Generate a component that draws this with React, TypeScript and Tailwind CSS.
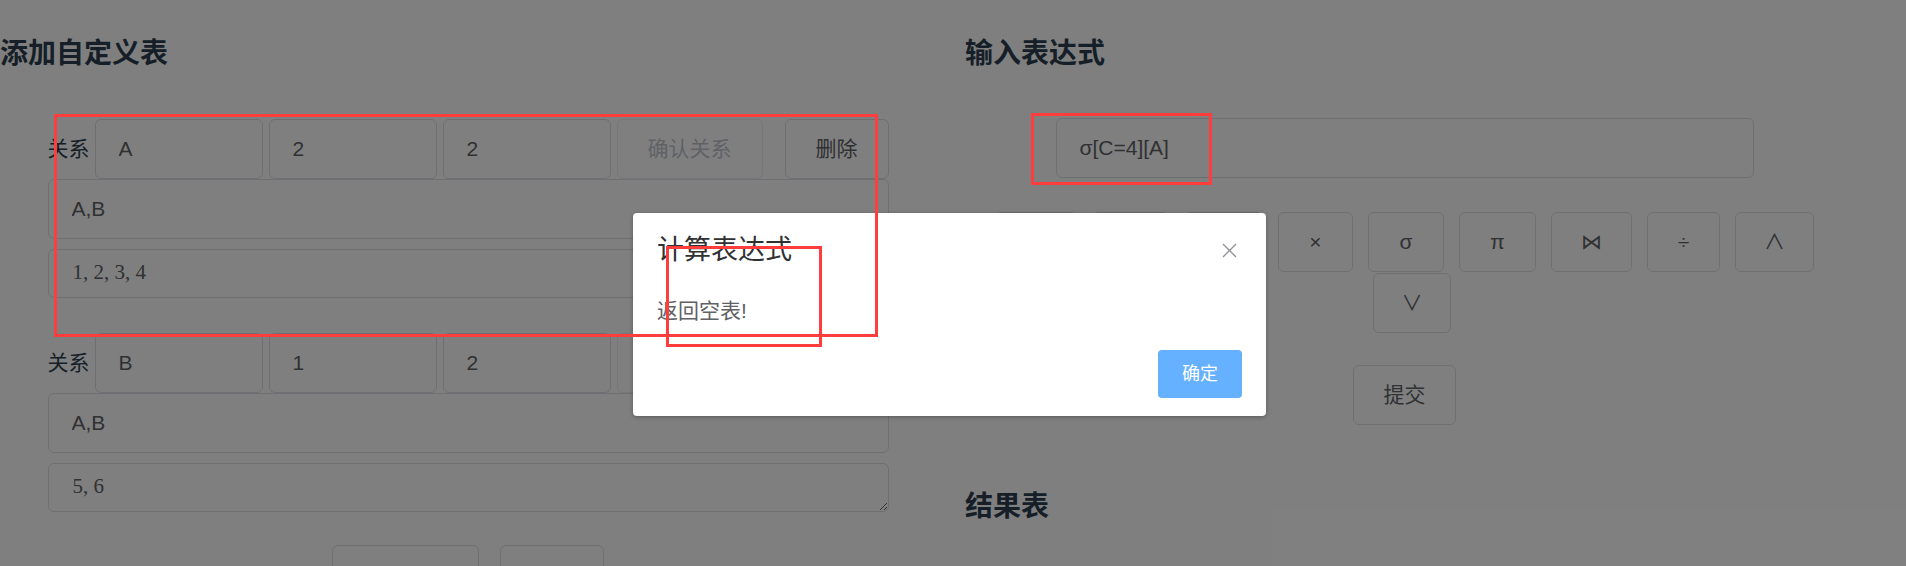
import React from 'react';

const sans = "font-['Liberation_Sans','Noto_Sans_CJK_SC',sans-serif]";

interface Relation {
  name: string;
  rows: string;
  cols: string;
  attrs: string;
  data: string;
}

const relations: Relation[] = [
  { name: 'A', rows: '2', cols: '2', attrs: 'A,B', data: '1, 2, 3, 4' },
  { name: 'B', rows: '1', cols: '2', attrs: 'A,B', data: '5, 6' },
];

// operator buttons, widths follow the glyph widths in the picture
const operators = [
  { label: '∪', w: 'w-[82px]' },
  { label: '∩', w: 'w-[77px]' },
  { label: '−', w: 'w-[79px]' },
  { label: '×', w: 'w-[75px]' },
  { label: 'σ', w: 'w-[76px]' },
  { label: 'π', w: 'w-[77px]' },
  { label: '⋈', w: 'w-[81px]' },
  { label: '÷', w: 'w-[73px]' },
  { label: '∧', w: 'w-[79px]' },
  { label: '∨', w: 'w-[78px]' },
];

function TextInput({ value, className }: { value: string; className: string }) {
  return (
    <input
      defaultValue={value}
      className={`h-[60px] rounded-[6px] border border-[#dcdfe6] bg-white px-[23px] text-[21px] text-[#606266] outline-none ${className}`}
    />
  );
}

function RelationBlock({ relation, className }: { relation: Relation; className?: string }) {
  return (
    <div className={`w-[841px] ${className ?? ''}`}>
      {/* Header row: name, row count, column count and actions */}
      <div className="flex h-[60px] items-center">
        <span className="w-[47px] text-[21px] text-[#2c3e50]">关系</span>
        <TextInput value={relation.name} className="w-[168px]" />
        <TextInput value={relation.rows} className="ml-[6px] w-[168px]" />
        <TextInput value={relation.cols} className="ml-[6px] w-[168px]" />
        <button className="ml-[6px] h-[60px] w-[146px] rounded-[6px] border border-[#ebeef5] bg-white text-[21px] text-[#c0c4cc]">
          确认关系
        </button>
        <button className="ml-[22px] h-[60px] w-[104px] rounded-[6px] border border-[#dcdfe6] bg-white text-[21px] text-[#606266]">
          删除
        </button>
      </div>
      <TextInput value={relation.attrs} className="w-[841px]" />
      <textarea
        defaultValue={relation.data}
        className="mt-[10px] block h-[49px] w-[841px] rounded-[6px] border border-[#dcdfe6] bg-white px-[24px] py-[7px] font-['Liberation_Serif',serif] text-[21px] leading-[31.5px] text-[#606266] outline-none"
      />
    </div>
  );
}

export default function App() {
  return (
    <div className={`relative h-[566px] w-[1906px] overflow-hidden bg-white ${sans}`}>
      <div className="flex gap-[29px]">
        {/* Left: custom tables */}
        <section className="flex w-[936px] flex-col">
          <h3 className="mt-[33px] h-[42px] text-[28px] font-bold leading-[42px] text-[#2c3e50]">添加自定义表</h3>
          <div className="mt-[44px] flex flex-col items-center">
            <RelationBlock relation={relations[0]} />
            <RelationBlock relation={relations[1]} className="mt-[35px]" />
            <div className="mt-[33px] flex gap-[21px]">
              <button className="h-[60px] w-[147px] rounded-[6px] border border-[#dcdfe6] bg-white pt-[12px] text-[21px] text-[#606266]">
                添加关系
              </button>
              <button className="h-[60px] w-[104px] rounded-[6px] border border-[#dcdfe6] bg-white pt-[12px] text-[21px] text-[#606266]">
                确认
              </button>
            </div>
          </div>
        </section>

        {/* Right: expression */}
        <section className="flex w-[879px] flex-col">
          <h3 className="mt-[33px] h-[42px] text-[28px] font-bold leading-[42px] text-[#2c3e50]">输入表达式</h3>
          <div className="flex flex-col items-center">
            <TextInput value="σ[C=4][A]" className="mt-[43px] w-[698px]" />
            <div className="mt-[34px] flex w-full flex-wrap justify-center gap-y-[1px]">
              {operators.map((op, i) => (
                <button
                  key={op.label}
                  className={`h-[60px] ${op.w} ${i > 0 ? 'ml-[15px]' : ''} rounded-[6px] border border-[#dcdfe6] bg-white text-[21px] text-[#606266]`}
                >
                  {op.label}
                </button>
              ))}
            </div>
            <button className="mt-[32px] h-[60px] w-[103px] rounded-[6px] border border-[#dcdfe6] bg-white text-[21px] text-[#606266]">
              提交
            </button>
          </div>
          <h3 className="mt-[61px] h-[42px] text-[28px] font-bold leading-[42px] text-[#2c3e50]">结果表</h3>
        </section>
      </div>

      {/* Modal mask */}
      <div className="absolute inset-0 bg-black/50" />

      {/* Dialog */}
      <div className="absolute left-[633px] top-[213px] h-[203px] w-[633px] rounded-[4px] bg-white shadow-[0_1px_4px_rgba(0,0,0,0.3)]">
        <div className="flex items-start justify-between pl-[24px] pr-[29px] pt-[19px]">
          <span className="text-[27px] leading-[36px] text-[#303133]">计算表达式</span>
          <svg className="mt-[11px] h-[15px] w-[15px]" viewBox="0 0 15 15" fill="none" stroke="#909399" strokeWidth="1.4">
            <path d="M1 1L14 14M14 1L1 14" />
          </svg>
        </div>
        <div className="mt-[27px] pl-[24px] text-[21px] leading-[31px] text-[#606266]">返回空表!</div>
        <div className="mt-[24px] flex justify-end pr-[24px]">
          <button className="h-[48px] w-[84px] rounded-[4px] bg-[#66b1ff] text-[18px] text-white">确定</button>
        </div>
      </div>

      {/* Annotation boxes */}
      <div className="absolute left-[54px] top-[114px] h-[223px] w-[824px] border-[3px] border-[#ff3d3d]" />
      <div className="absolute left-[1031px] top-[113px] h-[72px] w-[181px] border-[3px] border-[#ff3d3d]" />
      <div className="absolute left-[666px] top-[246px] h-[101px] w-[156px] border-[3px] border-[#ff3d3d]" />
    </div>
  );
}
